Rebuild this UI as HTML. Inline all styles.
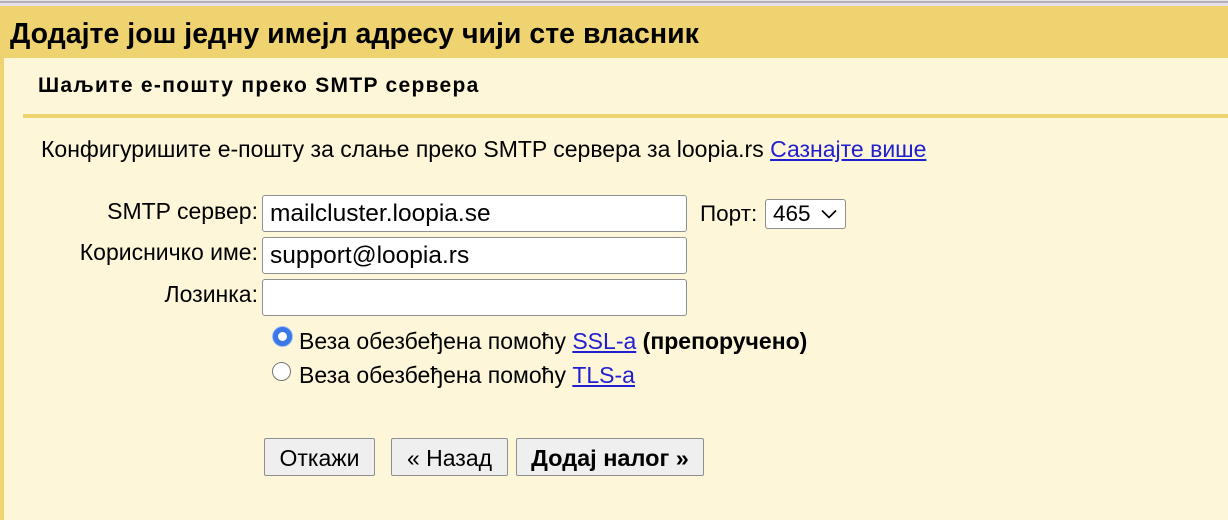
<!DOCTYPE html>
<html><head><meta charset="utf-8"><style>
body{margin:0;width:1228px;height:520px;overflow:hidden;background:#fdf6d8;font-family:"Liberation Sans",Arial,sans-serif;color:#000;position:relative}
.a{position:absolute;white-space:nowrap}
.in{position:absolute;left:262px;width:425px;height:35px;border:1px solid #8f8f8f;border-radius:3px;background:#fff;font-size:24.5px;line-height:35px;padding-left:7px;box-sizing:border-box}
.lab{position:absolute;right:970px;font-size:23px;text-align:right;white-space:nowrap}
a{text-decoration:underline;color:#2020d0}
.btn{position:absolute;top:438px;height:38px;border:1px solid #8f8f8f;border-radius:2px;background:#efefef;font-size:23px;line-height:38px;text-align:center;box-sizing:border-box}
.r{position:absolute;width:19px;height:19px;border-radius:50%;box-sizing:border-box;background:#fff}
</style></head><body>
<div class="a" style="left:0;top:0;width:1228px;height:6px;background:#e4e2e6"></div>
<div class="a" style="left:0;top:1px;width:1228px;height:2px;background:#b5b0b8"></div>
<div class="a" style="left:0;top:6px;width:1228px;height:52px;background:#f0d371"></div>
<div class="a" style="left:0;top:58px;width:4px;height:462px;background:#f0d371"></div>
<div class="a" style="left:10px;top:17px;font-size:28.5px;font-weight:bold;line-height:34px">Додајте још једну имејл адресу чији сте власник</div>
<div class="a" style="left:38px;top:74px;font-size:21px;font-weight:bold;line-height:24px;letter-spacing:1.3px">Шаљите е-пошту преко SMTP сервера</div>
<div class="a" style="left:23px;top:114px;width:1205px;height:4px;background:#f0d371"></div>
<div class="a" style="left:41px;top:136px;font-size:23px;line-height:26px">Конфигуришите е-пошту за слање преко SMTP сервера за loopia.rs <a>Сазнајте више</a></div>
<div class="lab" style="top:198px">SMTP сервер:</div>
<div class="lab" style="top:239px">Корисничко име:</div>
<div class="lab" style="top:281px">Лозинка:</div>
<div class="in" style="top:195px;height:37px">mailcluster.loopia.se</div>
<div class="in" style="top:237px;height:37px">support@loopia.rs</div>
<div class="in" style="top:279px;height:37px"></div>
<div class="a" style="left:700px;top:201px;font-size:22.5px">Порт:</div>
<div class="a" style="left:765px;top:199px;width:81px;height:30px;border:1px solid #8f8f8f;border-radius:3px;background:#fff;box-sizing:border-box;font-size:22.5px;line-height:28px;padding-left:7px">465<svg style="position:absolute;left:55px;top:9px" width="16" height="10" viewBox="0 0 16 10"><path d="M1 1.5 L8 8.5 L15 1.5" fill="none" stroke="#000" stroke-width="1.6"/></svg></div>
<div class="r" style="left:273px;top:327px;border:5px solid #3b78e7;box-shadow:0 0 0 1px #9ec0f5"></div>
<div class="a" style="left:299px;top:328px;font-size:23px;line-height:26px">Веза обезбеђена помоћу <a>SSL-a</a> <b>(препоручено)</b></div>
<div class="r" style="left:272px;top:362px;border:1px solid #767676"></div>
<div class="a" style="left:299px;top:362px;font-size:23px;line-height:26px">Веза обезбеђена помоћу <a>TLS-a</a></div>
<div class="btn" style="left:264px;width:111px">Откажи</div>
<div class="btn" style="left:391px;width:117px">« Назад</div>
<div class="btn" style="left:516px;width:188px;font-weight:bold;font-size:23.5px">Додај налог »</div>
</body></html>
